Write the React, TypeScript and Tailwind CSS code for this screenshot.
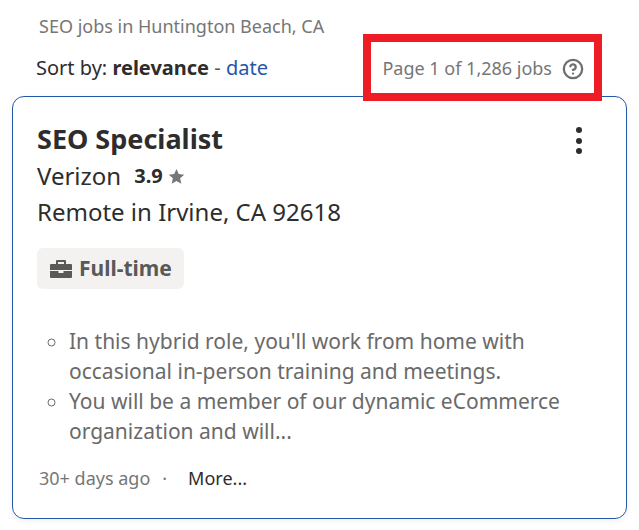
import { HelpCircle } from 'lucide-react';

export default function App() {
  return (
    <div className="relative h-[530px] w-[639px] overflow-hidden bg-white font-['Noto_Sans',sans-serif] text-[#2d2d2d]">
      <div className="pl-[39px] pt-[14px] text-[18px] leading-[24px] text-[#767676]">
        SEO jobs in Huntington Beach, CA
      </div>

      <div className="mt-[18px] flex items-center justify-between pl-[36px] pr-[55px] text-[20px] leading-[24px]">
        <div>
          Sort by: <b className="font-bold">relevance</b> <span className="text-[#595959]">-</span>{' '}
          <span className="text-[#2557a7]">date</span>
        </div>
        <div className="flex items-center gap-[10px] text-[18px] text-[#767676]">
          Page 1 of 1,286 jobs
          <HelpCircle className="mt-[2px] size-[22px] text-[#6f6f6f]" strokeWidth={2.5} />
        </div>
      </div>

      <div className="mx-[12px] mt-[16px] h-[423px] w-[615px] rounded-[12px] border border-[#2557a7] pl-[24px] pr-[24px] pt-[23px] shadow-[0_2px_6px_rgba(0,0,0,0.06)]">
        <div className="flex items-start justify-between">
          <h2 className="text-[27px] font-bold leading-[38px]">SEO Specialist</h2>
          <div className="mr-[20px] mt-[7px] flex flex-col gap-[4.500px]">
            <span className="size-[6px] rounded-full bg-[#2d2d2d]" />
            <span className="size-[6px] rounded-full bg-[#2d2d2d]" />
            <span className="size-[6px] rounded-full bg-[#2d2d2d]" />
          </div>
        </div>

        <div className="mt-[2px] flex items-center text-[24px] leading-[32px]">
          Verizon
          <span className="ml-[13px] text-[20px] font-bold">3.9</span>
          <svg viewBox="0 0 24 24" className="ml-[5px] size-[17px] fill-[#767676]">
            <path d="M12 1.5l3.2 7.1 7.7.8-5.8 5.2 1.7 7.6L12 18.3l-6.8 3.9 1.7-7.6L1.100 9.400l7.700-.8z" />
          </svg>
        </div>

        <div className="mt-[4px] text-[24px] leading-[32px]">Remote in Irvine, CA 92618</div>

        <div className="mt-[20px] flex h-[41px] w-fit items-center gap-[7px] rounded-[6px] bg-[#f3f2f1] pl-[13px] pr-[12px] text-[21px] font-bold text-[#595959]">
          <svg viewBox="0 0 22 18" className="h-[18px] w-[22px] fill-[#595959]">
            <path d="M7 0h8a1 1 0 0 1 1 1v3h5a1 1 0 0 1 1 1v5H0V5a1 1 0 0 1 1-1h5V1a1 1 0 0 1 1-1zm1 2v2h6V2z" />
            <path d="M0 11h8.500v2h5v-2H22v6a1 1 0 0 1-1 1H1a1 1 0 0 1-1-1z" />
          </svg>
          Full-time
        </div>

        <ul className="mt-[37px] list-[circle] pl-[32px] text-[21px] leading-[30px] text-[#6a6a6a] marker:text-[#6a6a6a]">
          <li>In this hybrid role, you'll work from home with occasional in-person training and meetings.</li>
          <li>You will be a member of our dynamic eCommerce organization and will...</li>
        </ul>

        <div className="mt-[20px] flex items-center text-[18px] leading-[24px] text-[#767676]">
          <span className="ml-[2px]">30+ days ago</span>
          <span className="ml-[12px]">·</span>
          <span className="ml-[21px] text-[#2d2d2d]">More...</span>
        </div>
      </div>

      <div className="absolute left-[363px] top-[34px] h-[67px] w-[239px] border-[8px] border-[#ee1c25]" />
    </div>
  );
}
